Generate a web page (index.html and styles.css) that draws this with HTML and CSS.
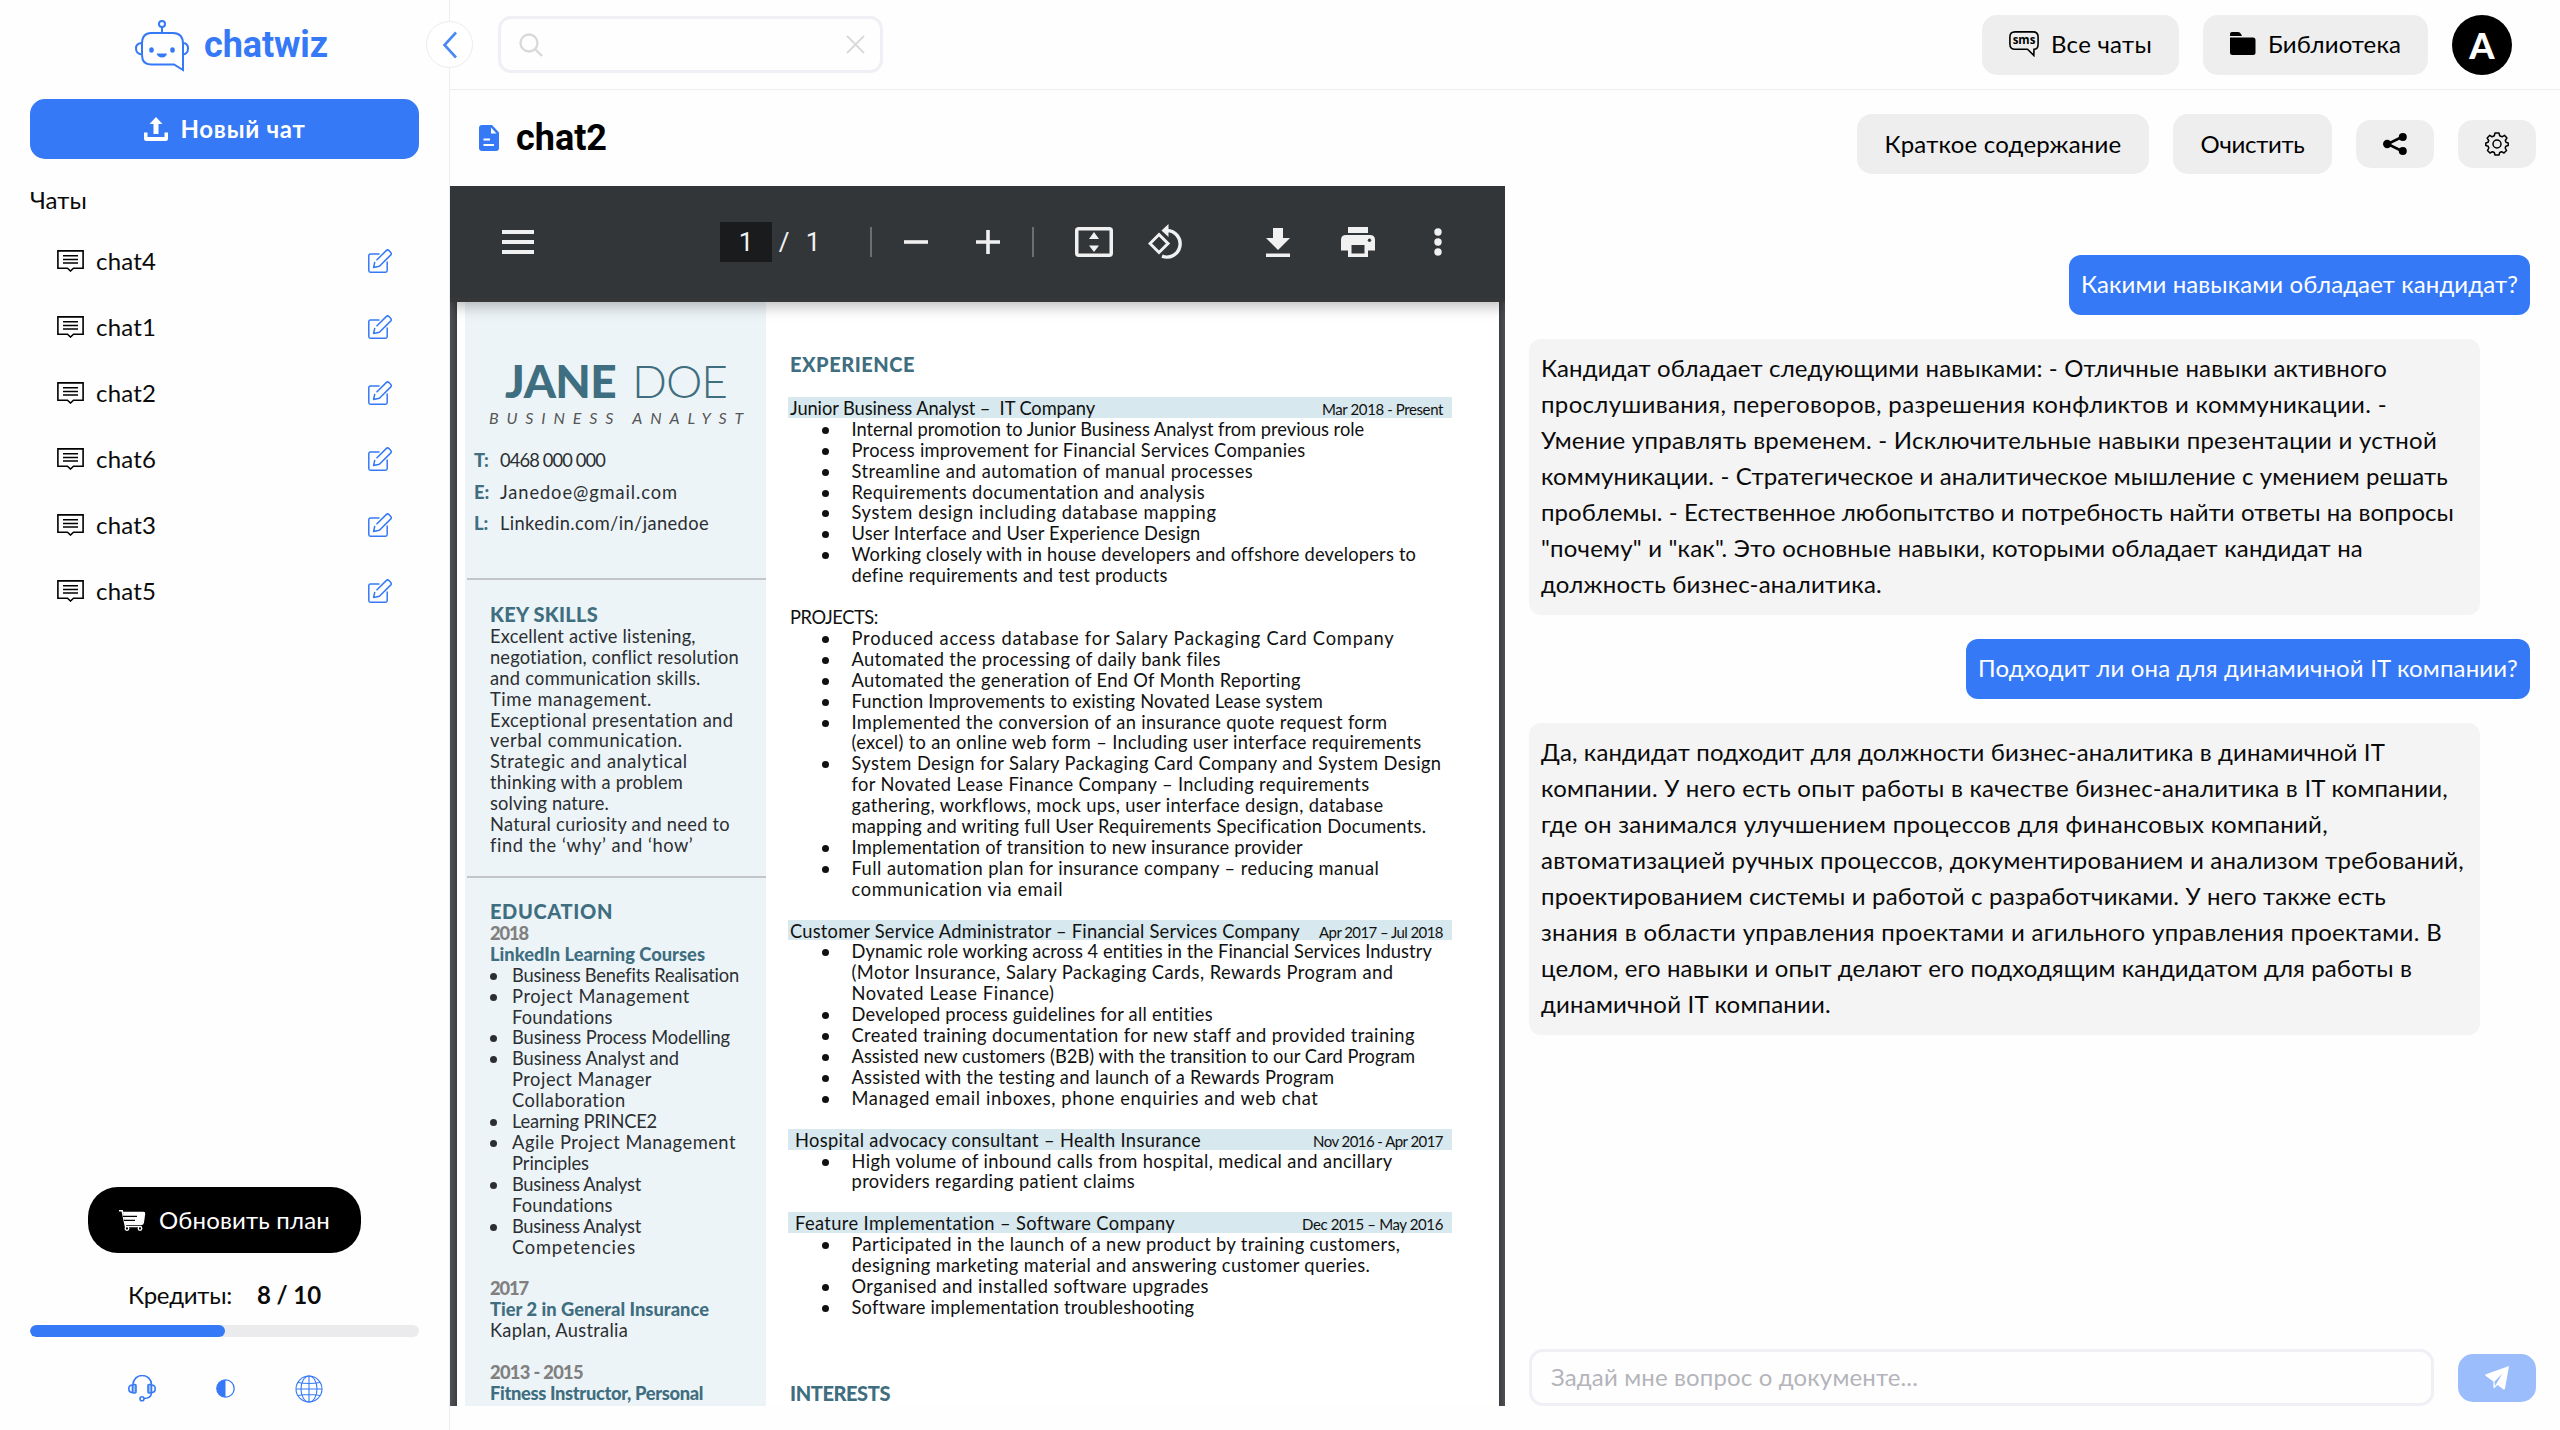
FILE: index.html
```html
<!DOCTYPE html>
<html lang="ru">
<head>
<meta charset="utf-8">
<title>chatwiz</title>
<link rel="stylesheet" href="styles.css">
</head>
<body>
<svg class="defs" aria-hidden="true">
  <symbol id="i-chat" viewBox="0 0 27 22"><path d="M.9.9H26.1V18.2H16.5L13.5 21L10.5 18.2H.9Z" fill="none" stroke="#000" stroke-width="1.6"/><path d="M6 5.8H21M6 9.4H21M6 13H21" stroke="#000" stroke-width="1.5"/></symbol>
  <symbol id="i-edit" viewBox="0 0 24 24"><path d="M11.5 4.9H2.2A1.6 1.6 0 0 0 .8 6.500V21.600A1.600 1.600 0 0 0 2.400 23.200H17.600A1.600 1.600 0 0 0 19.200 21.600V12.500" fill="none" stroke="#3579f6" stroke-width="1.5"/><path d="M6.800 12.800L5.600 18.500L11.400 17.300L22.600 6.100A2 2 0 0 0 22.600 3.300L21 1.600A2 2 0 0 0 18.200 1.600L8.500 11.300" fill="none" stroke="#3579f6" stroke-width="1.500" stroke-linejoin="round"/></symbol>
</svg>
<div class="app">
  <aside class="sidebar">
    <div class="logo">
      <svg width="54" height="52" viewBox="0 0 54 52" fill="none" stroke="#3579f6" stroke-width="2"><circle cx="27" cy="4" r="3"/><path d="M27 7V13M16 13H38Q48 13 48 24V50L39 44.500H16Q7 44.500 7 35V24Q7 13 16 13ZM7 23Q1 23 1 28.500T7 34.500M48 23Q53 23 53 28.500T48 34.500"/><ellipse cx="16.500" cy="30" rx="2.300" ry="2.800" fill="#3579f6" stroke="none"/><ellipse cx="37.500" cy="30" rx="2.300" ry="2.800" fill="#3579f6" stroke="none"/><path d="M21.500 33.500H32Q31 37.500 27 37.500T21.500 33.500Z" fill="#3579f6" stroke="none"/></svg>
      <span class="brand" data-w="124">chatwiz</span>
    </div>
    <button class="new-chat">
      <svg width="24" height="24" viewBox="0 0 24 24"><path d="M12 0L18.500 7H14.500V17H9.500V7H5.500ZM0 15.500H3.500V20H20.500V15.500H24V21.500Q24 24 21.500 24H2.500Q0 24 0 21.500Z" fill="#fff"/></svg>
      <span data-w="125">Новый чат</span>
    </button>
    <h2 class="list-title"><span data-w="57">Чаты</span></h2>
    <ul class="chats">
      <li><svg width="27" height="22"><use href="#i-chat"/></svg><span data-w="60">chat4</span><svg class="edit" width="24" height="24"><use href="#i-edit"/></svg></li>
      <li><svg width="27" height="22"><use href="#i-chat"/></svg><span data-w="60">chat1</span><svg class="edit" width="24" height="24"><use href="#i-edit"/></svg></li>
      <li><svg width="27" height="22"><use href="#i-chat"/></svg><span data-w="60">chat2</span><svg class="edit" width="24" height="24"><use href="#i-edit"/></svg></li>
      <li><svg width="27" height="22"><use href="#i-chat"/></svg><span data-w="60">chat6</span><svg class="edit" width="24" height="24"><use href="#i-edit"/></svg></li>
      <li><svg width="27" height="22"><use href="#i-chat"/></svg><span data-w="60">chat3</span><svg class="edit" width="24" height="24"><use href="#i-edit"/></svg></li>
      <li><svg width="27" height="22"><use href="#i-chat"/></svg><span data-w="60">chat5</span><svg class="edit" width="24" height="24"><use href="#i-edit"/></svg></li>
    </ul>
    <div class="plan">
      <button class="upgrade">
        <svg width="27" height="21" viewBox="0 0 27 21"><path d="M0 .8H3.200L6.500 16.500H22.500" fill="none" stroke="#fff" stroke-width="1.500"/><path d="M4 1.800H24.500Q26.500 1.800 26.200 4L25 12.500Q24.600 15 22.500 15H6.500Z" fill="#fff"/><path d="M4 6.300H18M5 10.400H16" stroke="#000" stroke-width="1.300"/><circle cx="8" cy="18.500" r="1.800" fill="#000" stroke="#fff" stroke-width="1.300"/><circle cx="21" cy="18.500" r="1.800" fill="#000" stroke="#fff" stroke-width="1.300"/></svg>
        <span data-w="171">Обновить план</span>
      </button>
      <p class="credits"><span data-w="104">Кредиты:</span><b data-w="64">8 / 10</b></p>
      <div class="bar"><div class="bar-fill"></div></div>
      <div class="tools">
        <svg width="28" height="27" viewBox="0 0 28 27" fill="none" stroke="#3579f6" stroke-width="1.600"><path d="M5 9.500A9 8.700 0 0 1 23.500 9.500M23.500 18Q23 23.500 16 23.500"/><rect x="4.500" y="9.500" width="3.500" height="8.500" rx="1" fill="#9bbdfb"/><rect x="20" y="9.500" width="3.500" height="8.500" rx="1" fill="#9bbdfb"/><path d="M4.500 10Q.8 10 .8 13.800T4.500 17.600M23.500 10Q27.200 10 27.200 13.800T23.500 17.600"/><circle cx="14" cy="23.800" r="2"/></svg>
        <svg width="19" height="19" viewBox="0 0 19 19"><circle cx="9.500" cy="9.500" r="8.700" fill="none" stroke="#3579f6" stroke-width="1.300"/><path d="M9.500 .8A8.700 8.700 0 0 0 9.500 18.200Z" fill="#3579f6"/></svg>
        <svg width="28" height="28" viewBox="0 0 28 28" fill="none" stroke="#3579f6" stroke-width="1.100"><circle cx="14" cy="14" r="13"/><ellipse cx="14" cy="14" rx="8" ry="13"/><path d="M14 1V27M1 14H27M3 7.500Q14 9.500 25 7.500M3 20.500Q14 18.500 25 20.500"/></svg>
      </div>
    </div>
    <button class="collapse"><svg width="16" height="28" viewBox="0 0 16 28"><path d="M14 1.500L2.500 14L14 26.500" fill="none" stroke="#4a88f7" stroke-width="2.600"/></svg></button>
  </aside>
  <main class="main">
    <header class="topbar">
      <div class="search">
        <svg width="24" height="24" viewBox="0 0 24 24" fill="none" stroke="#d9d9d9" stroke-width="2.400"><circle cx="10" cy="10" r="8.500"/><path d="M16 16L23 23"/></svg>
        <svg width="19" height="19" viewBox="0 0 19 19" stroke="#d9d9d9" stroke-width="1.800"><path d="M1 1L18 18M18 1L1 18"/></svg>
      </div>
      <div class="top-actions">
        <button class="btn">
          <svg width="30" height="26" viewBox="0 0 30 26"><path d="M6 .9H24Q29.100 .9 29.100 6V13Q29.100 18.300 25 18.300L24.800 24.500L18.500 18.300H6Q.9 18.300 .9 13V6Q.9 .9 6 .9Z" fill="none" stroke="#000" stroke-width="1.600"/><text class="sms" x="15" y="13" text-anchor="middle">sms</text></svg>
          <span data-w="101">Все чаты</span>
        </button>
        <button class="btn">
          <svg width="26" height="24" viewBox="0 0 26 24"><path d="M2 0H8Q10 0 11 2L12 4H0V2Q0 0 2 0ZM0 5.500H23Q25.500 5.500 25.500 8V20.500Q25.500 23 23 23H2.500Q0 23 0 20.500Z"/></svg>
          <span data-w="133">Библиотека</span>
        </button>
        <div class="avatar">A</div>
      </div>
    </header>
    <div class="title-row">
      <svg width="20" height="26" viewBox="0 0 20 26"><path d="M3 0H13L20 7.500V23Q20 26 17 26H3Q0 26 0 23V3Q0 0 3 0Z" fill="#3579f6"/><path d="M12 2.500V8.500H17.500" fill="#fff"/><path d="M4.500 14.500H11M4.500 20H15" stroke="#fff" stroke-width="2"/></svg>
      <h1 data-w="91">chat2</h1>
      <div class="chat-actions">
        <button class="btn"><span data-w="237">Краткое содержание</span></button>
        <button class="btn"><span data-w="104">Очистить</span></button>
        <button class="btn small"><svg width="24" height="22" viewBox="0 0 24 22"><path d="M20 3.500L4.500 11L20 18.500" fill="none" stroke="#000" stroke-width="2.500"/><circle cx="4.200" cy="11" r="4.200"/><circle cx="19.800" cy="4" r="4"/><circle cx="19.800" cy="18" r="4"/></svg></button>
        <button class="btn small"><svg width="24" height="24" viewBox="0 0 24 24" fill="none" stroke="#000" stroke-width="1.500" stroke-linejoin="round"><path d="M10 1H14L14.700 3.800L17 4.800L19.500 3.300L21.900 6L20.300 8.500L21 10.300L23.200 11V13.500L20.800 14.300L20.200 16L21.500 18.500L19 21L16.600 19.700L14.700 20.500L14 23H10L9.300 20.500L7.400 19.700L5 21L2.500 18.500L3.800 16L3.200 14.300L.8 13.500V11L3.100 10.300L3.700 8.500L2.200 6L4.800 3.300L7 4.800L9.300 3.800Z"/><circle cx="12" cy="12" r="4"/></svg></button>
      </div>
    </div>
    <div class="panes">
      <section class="viewer">
        <div class="pdf-bar">
          <svg class="burger" width="32" height="24" viewBox="0 0 32 24"><path d="M0 2H32M0 12H32M0 22H32" stroke="#f1f1f1" stroke-width="4"/></svg>
          <span class="page-now">1</span><span class="slash">/</span><span class="page-all">1</span>
          <i class="sep s1"></i>
          <svg class="minus" width="24" height="24" viewBox="0 0 24 24"><path d="M0 12H24" stroke="#f1f1f1" stroke-width="3.600"/></svg>
          <svg class="plus" width="24" height="24" viewBox="0 0 24 24"><path d="M0 12H24M12 0V24" stroke="#f1f1f1" stroke-width="3.600"/></svg>
          <i class="sep s2"></i>
          <svg class="fitpage" width="38" height="30" viewBox="0 0 38 30"><rect x="1.750" y="1.750" width="34.500" height="26.500" rx="2" fill="none" stroke="#f1f1f1" stroke-width="3.500"/><path d="M19 5L24 12H14ZM19 25L24 18.500H14Z" fill="#f1f1f1"/></svg>
          <svg class="rotate" width="36" height="36" viewBox="0 0 36 36" fill="none" stroke="#f1f1f1"><path d="M11 10.500L20 19.500L11 28.500L2 19.500Z" stroke-width="3"/><path d="M19 6.500A13.300 13.300 0 1 1 14 32.200" stroke-width="3.400"/><path d="M20.500 0V13L13.500 6.500Z" fill="#f1f1f1" stroke="none"/></svg>
          <svg class="download" width="24" height="29" viewBox="0 0 24 29"><path d="M7 0H17V10H24L12 22L0 10H7ZM0 25.500H24V29H0Z" fill="#f1f1f1"/></svg>
          <svg class="print" width="34" height="30" viewBox="0 0 34 30"><path d="M7 0H27V6H7ZM5 8H29Q34 8 34 13V23.500H27V30H7V23.500H0V13Q0 8 5 8ZM10.500 18V26.500H23.500V18Z" fill="#f1f1f1" fill-rule="evenodd"/><circle cx="28.500" cy="13.300" r="1.700" fill="#323639"/></svg>
          <svg class="dots" width="8" height="28" viewBox="0 0 8 28" fill="#f1f1f1"><circle cx="4" cy="4" r="3.700"/><circle cx="4" cy="14" r="3.700"/><circle cx="4" cy="24" r="3.700"/></svg>
        </div>
        <div class="page-area">
        <article class="page">
          <div class="cv-left">
            <header class="cv-head">
              <div class="cv-name"><b data-w="111">JANE</b><span data-w="95">DOE</span></div>
              <div class="cv-role" data-w="262">BUSINESS ANALYST</div>
              <dl class="contacts">
                <div><dt>T:</dt><dd data-w="105">0468 000 000</dd></div>
                <div><dt>E:</dt><dd data-w="178">Janedoe@gmail.com</dd></div>
                <div><dt>L:</dt><dd data-w="209">Linkedin.com/in/janedoe</dd></div>
              </dl>
            </header>
            <section class="cv-skills">
              <h3 data-w="108">KEY SKILLS</h3>
              <p data-w="206">Excellent active listening,</p>
              <p data-w="250">negotiation, conflict resolution</p>
              <p data-w="211">and communication skills.</p>
              <p data-w="162">Time management.</p>
              <p data-w="244">Exceptional presentation and</p>
              <p data-w="193">verbal communication.</p>
              <p data-w="198">Strategic and analytical</p>
              <p data-w="193">thinking with a problem</p>
              <p data-w="119">solving nature.</p>
              <p data-w="240">Natural curiosity and need to</p>
              <p data-w="203">find the ‘why’ and ‘how’</p>
            </section>
            <section class="cv-edu">
              <h3 data-w="123">EDUCATION</h3>
              <p class="year" data-w="38">2018</p>
              <p class="course" data-w="215">LinkedIn Learning Courses</p>
              <ul>
                <li><div><p data-w="227">Business Benefits Realisation</p></div></li>
                <li><div><p data-w="178">Project Management</p><p data-w="101">Foundations</p></div></li>
                <li><div><p data-w="218">Business Process Modelling</p></div></li>
                <li><div><p data-w="167">Business Analyst and</p><p data-w="140">Project Manager</p><p data-w="114">Collaboration</p></div></li>
                <li><div><p data-w="145">Learning PRINCE2</p></div></li>
                <li><div><p data-w="224">Agile Project Management</p><p data-w="77">Principles</p></div></li>
                <li><div><p data-w="129">Business Analyst</p><p data-w="101">Foundations</p></div></li>
                <li><div><p data-w="129">Business Analyst</p><p data-w="124">Competencies</p></div></li>
              </ul>
              <p class="year gap" data-w="38">2017</p>
              <p class="course" data-w="219">Tier 2 in General Insurance</p>
              <p data-w="138">Kaplan, Australia</p>
              <p class="year gap" data-w="93">2013 - 2015</p>
              <p class="course" data-w="213">Fitness Instructor, Personal</p>
            </section>
          </div>
          <div class="cv-right">
            <h3 data-w="125">EXPERIENCE</h3>
            <div class="job"><span data-w="305">Junior Business Analyst –  IT Company</span><time data-w="121">Mar 2018 - Present</time></div>
            <ul>
              <li><div><p data-w="513">Internal promotion to Junior Business Analyst from previous role</p></div></li>
              <li><div><p data-w="454">Process improvement for Financial Services Companies</p></div></li>
              <li><div><p data-w="402">Streamline and automation of manual processes</p></div></li>
              <li><div><p data-w="354">Requirements documentation and analysis</p></div></li>
              <li><div><p data-w="365">System design including database mapping</p></div></li>
              <li><div><p data-w="349">User Interface and User Experience Design</p></div></li>
              <li><div><p data-w="564">Working closely with in house developers and offshore developers to</p><p data-w="316">define requirements and test products</p></div></li>
            </ul>
            <p class="sub gap" data-w="88">PROJECTS:</p>
            <ul>
              <li><div><p data-w="543">Produced access database for Salary Packaging Card Company</p></div></li>
              <li><div><p data-w="369">Automated the processing of daily bank files</p></div></li>
              <li><div><p data-w="450">Automated the generation of End Of Month Reporting</p></div></li>
              <li><div><p data-w="472">Function Improvements to existing Novated Lease system</p></div></li>
              <li><div><p data-w="536">Implemented the conversion of an insurance quote request form</p><p data-w="570">(excel) to an online web form – Including user interface requirements</p></div></li>
              <li><div><p data-w="590">System Design for Salary Packaging Card Company and System Design</p><p data-w="518">for Novated Lease Finance Company – Including requirements</p><p data-w="532">gathering, workflows, mock ups, user interface design, database</p><p data-w="575">mapping and writing full User Requirements Specification Documents.</p></div></li>
              <li><div><p data-w="452">Implementation of transition to new insurance provider</p></div></li>
              <li><div><p data-w="528">Full automation plan for insurance company – reducing manual</p><p data-w="212">communication via email</p></div></li>
            </ul>
            <div class="job gap"><span data-w="510">Customer Service Administrator – Financial Services Company</span><time data-w="124">Apr 2017 – Jul 2018</time></div>
            <ul>
              <li><div><p data-w="581">Dynamic role working across 4 entities in the Financial Services Industry</p><p data-w="542">(Motor Insurance, Salary Packaging Cards, Rewards Program and</p><p data-w="203">Novated Lease Finance)</p></div></li>
              <li><div><p data-w="362">Developed process guidelines for all entities</p></div></li>
              <li><div><p data-w="563">Created training documentation for new staff and provided training</p></div></li>
              <li><div><p data-w="564">Assisted new customers (B2B) with the transition to our Card Program</p></div></li>
              <li><div><p data-w="483">Assisted with the testing and launch of a Rewards Program</p></div></li>
              <li><div><p data-w="467">Managed email inboxes, phone enquiries and web chat</p></div></li>
            </ul>
            <div class="job inset gap"><span data-w="406">Hospital advocacy consultant – Health Insurance</span><time data-w="130">Nov 2016 - Apr 2017</time></div>
            <ul>
              <li><div><p data-w="541">High volume of inbound calls from hospital, medical and ancillary</p><p data-w="284">providers regarding patient claims</p></div></li>
            </ul>
            <div class="job inset gap"><span data-w="380">Feature Implementation – Software Company</span><time class="late" data-w="141">Dec 2015 – May 2016</time></div>
            <ul>
              <li><div><p data-w="549">Participated in the launch of a new product by training customers,</p><p data-w="519">designing marketing material and answering customer queries.</p></div></li>
              <li><div><p data-w="357">Organised and installed software upgrades</p></div></li>
              <li><div><p data-w="343">Software implementation troubleshooting</p></div></li>
            </ul>
            <h3 class="interests" data-w="100">INTERESTS</h3>
          </div>
        </article>
        </div>
      </section>
      <section class="chat">
        <div class="messages">
          <div class="msg me"><p data-w="437">Какими навыками обладает кандидат?</p></div>
          <div class="msg bot">
            <p data-w="846">Кандидат обладает следующими навыками: - Отличные навыки активного</p>
            <p data-w="846">прослушивания, переговоров, разрешения конфликтов и коммуникации. -</p>
            <p data-w="896">Умение управлять временем. - Исключительные навыки презентации и устной</p>
            <p data-w="907">коммуникации. - Стратегическое и аналитическое мышление с умением решать</p>
            <p data-w="913">проблемы. - Естественное любопытство и потребность найти ответы на вопросы</p>
            <p data-w="822">"почему" и "как". Это основные навыки, которыми обладает кандидат на</p>
            <p data-w="341">должность бизнес-аналитика.</p>
          </div>
          <div class="msg me"><p data-w="540">Подходит ли она для динамичной IT компании?</p></div>
          <div class="msg bot">
            <p data-w="844">Да, кандидат подходит для должности бизнес-аналитика в динамичной IT</p>
            <p data-w="907">компании. У него есть опыт работы в качестве бизнес-аналитика в IT компании,</p>
            <p data-w="787">где он занимался улучшением процессов для финансовых компаний,</p>
            <p data-w="923">автоматизацией ручных процессов, документированием и анализом требований,</p>
            <p data-w="845">проектированием системы и работой с разработчиками. У него также есть</p>
            <p data-w="901">знания в области управления проектами и агильного управления проектами. В</p>
            <p data-w="871">целом, его навыки и опыт делают его подходящим кандидатом для работы в</p>
            <p data-w="290">динамичной IT компании.</p>
          </div>
        </div>
        <form class="ask">
          <div class="field"><span data-w="367">Задай мне вопрос о документе...</span></div>
          <button class="send" type="button"><svg width="24" height="24" viewBox="0 0 24 24"><path d="M24 0L20 22.500Q19.600 24 18.300 23.300L12.500 19L9.800 21.800Q8.500 22.500 8.400 21V15.500L.8 10Q-.5 9 1 8.200ZM10 20L17.500 7.500L9.500 15.500Z" fill="#fff" fill-rule="evenodd"/></svg></button>
        </form>
      </section>
    </div>
  </main>
</div>
<script src="fit.js"></script>
</body>
</html>
```
FILE: styles.css
```css
* { box-sizing: border-box; margin: 0; padding: 0; }
body { font: 400 24px/36px Lato, "Noto Sans", sans-serif; color: #0a0a0a; background: #fefefe; }
button { font: inherit; color: inherit; border: 0; background: none; display: flex; align-items: center; justify-content: center; }
ul { list-style: none; }
svg { display: block; flex: none; }
.defs { width: 0; height: 0; position: absolute; }
[data-w] { white-space: pre; width: max-content; flex: none; display: block; }

.app { display: flex; width: 2560px; height: 1430px; overflow: hidden; }
.sidebar { position: relative; width: 450px; flex: none; border-right: 1px solid #eeeef2; padding: 0 30px; display: flex; flex-direction: column; }
.logo { height: 99px; padding: 20px 0 0 105px; display: flex; gap: 15px; }
.brand { font: 700 36px/42px Roboto, sans-serif; color: #3579f6; margin-top: 4px; }
.new-chat { height: 60px; width: 389px; background: #3579f6; color: #fff; font-weight: 700; border-radius: 15px; gap: 13px; }
.list-title { font-size: 24px; font-weight: 400; margin: 23px 0 28px; line-height: 36px; height: 18px; }
.chats li { height: 66px; display: flex; align-items: center; padding: 0 27px; gap: 12px; }
.edit { margin-left: auto; }
.plan { margin-top: auto; display: flex; flex-direction: column; align-items: center; padding-bottom: 27px; width: 389px; }
.upgrade { width: 273px; height: 66px; border-radius: 30px; background: #000; color: #fff; gap: 13px; }
.credits { display: flex; gap: 25px; margin-top: 24px; height: 36px; }
.bar { width: 389px; height: 12px; margin-top: 12px; border-radius: 6px; background: #ebebed; overflow: hidden; }
.bar-fill { width: 195px; height: 12px; border-radius: 6px; background: #3579f6; }
.tools { display: flex; align-items: center; gap: 60px; margin-top: 37px; height: 29px; padding-left: 2px; }
.collapse { position: absolute; left: 426px; top: 21px; width: 47px; height: 47px; border-radius: 50%; background: #fff; border: 1px solid #ececf0; z-index: 2; }

.main { flex: 1; min-width: 0; display: flex; flex-direction: column; }
.topbar { height: 90px; border-bottom: 1px solid #eeeef0; display: flex; align-items: center; justify-content: space-between; padding: 0 48px; }
.search { width: 385px; height: 57px; border: 3px solid #efeff6; border-radius: 13px; display: flex; align-items: center; justify-content: space-between; padding: 0 15px 0 18px; }
.top-actions, .chat-actions { display: flex; align-items: center; gap: 24px; }
.btn { height: 60px; padding: 0 27.500px 1px; border-radius: 15px; background: #eee; gap: 12px; color: #000; }
.top-actions .btn { padding: 0 27px 1px; }
.btn.small { width: 78px; height: 48px; padding: 0; }
.sms { font: 700 11.500px/1 "Open Sans", sans-serif; }
.avatar { width: 60px; height: 60px; border-radius: 50%; background: #000; color: #fff; font: 900 36px/60px Lato, sans-serif; text-align: center; }
.title-row { height: 96px; display: flex; align-items: center; padding: 0 24px 0 29px; }
.title-row h1 { font: 700 36px/42px Roboto, sans-serif; color: #000; margin-left: 17px; }
.chat-actions { margin: 12px 0 0 auto; }

.panes { flex: 1; display: flex; min-height: 0; }
.viewer { width: 1055px; height: 1220px; flex: none; overflow: hidden; background: #45484b; display: flex; flex-direction: column; }
.pdf-bar { height: 112px; flex: none; background: #323639; display: flex; align-items: center; padding-left: 52px; color: #f1f1f1; font: 400 26px/40px Roboto, sans-serif; position: relative; z-index: 1; box-shadow: 0 4px 0 #353739, 0 4px 14px 4px rgba(0,0,0,.28); }
.page-now { width: 52px; height: 40px; background: #191b1c; text-align: center; margin-left: 186px; }
.slash { width: 18px; margin-left: 3px; text-align: center; }
.page-all { width: 18px; margin-left: 11px; text-align: center; }
.sep { width: 2px; height: 30px; background: #6c6f71; margin-left: 48px; }
.minus { margin-left: 32px; }
.plus { margin-left: 48px; }
.s2 { margin-left: 32px; }
.fitpage { margin-left: 41px; }
.rotate { margin-left: 35px; }
.download { margin-left: 82px; }
.print { margin-left: 51px; }
.dots { margin-left: 59px; }

.page-area { flex: 1; min-height: 0; overflow: hidden; padding: 4px 6px 0 7px; background: linear-gradient(90deg, #505356 0, #3c3e40 7px, #3c3e40 1049px, #4c4f52 1055px); }
.page { display: flex; height: 1400px; background: #fff; padding-left: 8px; font-size: 18.300px; line-height: 23px; color: #111; }
.page p { height: 20.920px; }
.page h3 { height: 20.920px; font-size: 20px; font-weight: 900; line-height: 21.500px; color: #3f6e80; }
.page .gap { margin-top: 20.920px; }
.page li { display: flex; }
.page li::before { content: ""; width: 7px; height: 7px; border-radius: 50%; background: currentColor; margin-top: 9px; flex: none; }
.cv-left { width: 301px; background: #edf4f8; color: #2b2f31; }
.cv-head { height: 276px; padding: 51px 0 0 9px; }
.cv-name { display: flex; gap: 16px; padding-left: 31px; height: 55px; font-size: 46px; line-height: 55px; color: #3f6e80; }
.cv-name b { font-weight: 900; }
.cv-name span { font-weight: 300; }
.cv-role { margin-left: 15px; font-size: 16px; line-height: 20px; font-style: italic; color: #555; }
.contacts { margin-top: 17px; line-height: 31.500px; }
.contacts div { display: flex; }
.contacts dt { width: 26px; font-weight: 900; color: #3f6e80; }
.cv-skills, .cv-edu { margin-left: 2px; border-top: 2px solid #c3c5c6; padding-left: 23px; }
.cv-skills { height: 298px; padding-top: 24px; }
.cv-edu { padding-top: 23px; }
.cv-edu li::before { margin-right: 15px; }
.year { font-weight: 900; color: #808080; }
.course { font-weight: 900; color: #3f6e80; }
.cv-right { width: 664px; margin-left: 22px; padding-top: 52px; }
.cv-right h3 { margin-left: 2px; margin-bottom: 22px; }
.cv-right li::before { margin: 9px 23px 0 33.500px; }
.sub { margin-left: 2px; }
.job { display: flex; justify-content: space-between; background: #d7e8ee; height: 20.920px; padding: 0 9px 0 2px; }
.job.inset { padding-left: 7px; }
.job time { font-size: 15px; line-height: 25px; }
.cv-right .interests { margin-top: 66px; }

.chat { flex: 1; display: flex; flex-direction: column; justify-content: space-between; padding: 69px 24px 24px; }
.messages { display: flex; flex-direction: column; gap: 24px; padding-right: 6px; }
.msg { border-radius: 12px; padding: 11px 12px 13px; }
.me { align-self: flex-end; background: #3579f6; color: #fff; }
.bot { width: 951px; background: #f4f4f4; }
.ask { display: flex; align-items: center; gap: 24px; }
.field { width: 905px; height: 57px; border: 3px solid #efeff6; border-radius: 14px; padding: 7px 19px; color: #b4b4bb; }
.send { width: 78px; height: 48px; border-radius: 15px; background: #9bbdfc; }
```
FILE: fit.js
```js
// Tracks each text line so it fills its typeset width.
document.querySelectorAll('[data-w]').forEach(function (el) {
  var extra = Number(el.dataset.w) - el.getBoundingClientRect().width;
  el.style.letterSpacing = extra / el.textContent.length + 'px';
});
```
